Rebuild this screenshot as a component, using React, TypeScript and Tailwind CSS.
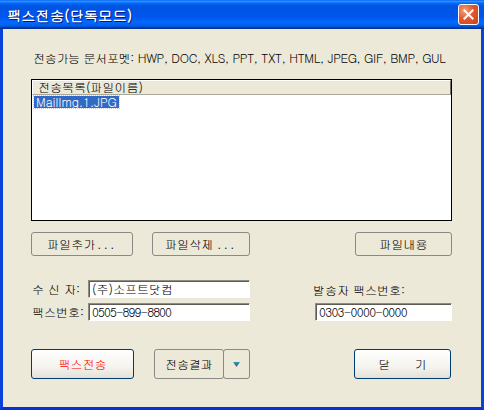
import React from "react";

const font = "font-['Gulim','Noto_Sans_CJK_KR',sans-serif]";

function Btn({ w, h, children, strong, className = "" }: { w: string; h: string; children: React.ReactNode; strong?: boolean; className?: string }) {
  return (
    <div
      className={`${w} ${h} flex items-center justify-center rounded-[3px] border ${
        strong
          ? "border-[#003C74] bg-[linear-gradient(to_bottom,#FFFFFF_0%,#F4F3EE_60%,#E3E1D6_100%)]"
          : "border-[#8A8A84] bg-[#ECE9D8]"
      } text-[12px] leading-[14px] text-black ${className}`}
    >
      {children}
    </div>
  );
}

function Field({ w, value, track = "" }: { w: string; value: string; track?: string }) {
  return (
    <div
      className={`${w} h-[18px] bg-white border-t border-l border-[#8E8B80] border-b border-r border-b-white border-r-white shadow-[inset_1px_1px_0_#5E5C55] flex items-center pl-[3px] text-[12px] leading-[14px] text-black ${track}`}
    >
      {value}
    </div>
  );
}

export default function App() {
  return (
    <div className={`w-[484px] h-[410px] flex flex-col ${font}`}>
      {/* title bar */}
      <div className="h-[29px] shrink-0 flex items-center justify-between pl-[7px] pr-[5px] bg-[linear-gradient(to_bottom,#0058EE_0%,#3593FF_4%,#288EFF_6%,#127DFF_8%,#036FFC_10%,#0262EE_14%,#0057E5_20%,#0054E3_24%,#0055EB_56%,#005BF5_66%,#026AFE_76%,#0062EF_86%,#0052D6_92%,#0040AB_94%,#003092_100%)]">
        <span className="text-white font-bold text-[14px] leading-[16px] tracking-[0.3px] [text-shadow:1px_1px_0_#0A1883]">
          팩스전송(단독모드)
        </span>
        <div className="w-[21px] h-[21px] rounded-[3px] border border-white bg-[radial-gradient(circle_at_30%_30%,#F0A080_0%,#E2592F_45%,#C8401C_100%)] flex items-center justify-center">
          <svg width="11" height="11" viewBox="0 0 11 11">
            <path d="M1.5 1.5 L9.5 9.5 M9.5 1.5 L1.5 9.5" stroke="white" strokeWidth="2" strokeLinecap="square" />
          </svg>
        </div>
      </div>

      {/* body with frame */}
      <div className="flex-1 flex flex-col bg-[#ECE9D8] border-l-[3px] border-r-[3px] border-b-[3px] border-l-[#0842D8] border-r-[#0842D8] border-b-[#0831D9] pl-[28px] pt-[22px]">
        <div className="text-[12px] leading-[14px] text-black ml-[2px] whitespace-nowrap tracking-[-0.3px]">
          전송가능 문서포멧: HWP, DOC, XLS, PPT, TXT, HTML, JPEG, GIF, BMP, GUL
        </div>

        {/* list box */}
        <div className="mt-[14px] w-[421px] h-[142px] border border-black bg-white flex flex-col">
          <div className="h-[15px] shrink-0 bg-[#ECE9D8] border-t border-l border-white border-b border-r border-b-[#ACA899] border-r-[#716F64] text-[12px] leading-[12px] pl-[5px] text-black">
            전송목록(파일이름)
          </div>
          <div className="mt-[1px] ml-[2px] self-start h-[12px] px-[2px] bg-[#316AC5] outline outline-1 outline-dotted outline-[#F0D060] text-white text-[12px] leading-[12px]">
            MailImg.1.JPG
          </div>
        </div>

        {/* buttons row 1 */}
        <div className="mt-[11px] flex">
          <Btn w="w-[102px]" h="h-[24px]">
            파일추가<span className="tracking-[2.5px] ml-[2px]">...</span>
          </Btn>
          <Btn w="w-[98px]" h="h-[24px]" className="ml-[19px]">
            파일삭제<span className="tracking-[2.5px] ml-[4px]">...</span>
          </Btn>
          <Btn w="w-[97px]" h="h-[24px]" className="ml-[105px]">파일내용</Btn>
        </div>

        {/* fields */}
        <div className="mt-[24px] flex">
          <div className="flex flex-col gap-[5px]">
            <div className="flex items-center">
              <span className="w-[57px] pl-[1px] text-[12px] leading-[14px] whitespace-pre">수 신 자:</span>
              <Field w="w-[162px]" value="(주)소프트닷컴" />
            </div>
            <div className="flex items-center">
              <span className="w-[57px] pl-[1px] text-[12px] leading-[14px]">팩스번호:</span>
              <Field w="w-[162px]" value="0505-899-8800" track="tracking-[-0.9px]" />
            </div>
          </div>
          <div className="ml-[63px] flex flex-col">
            <span className="mt-[3px] text-[12px] leading-[14px] whitespace-nowrap">발송자 팩스번호:</span>
            <div className="mt-[6px] ml-[2px]">
              <Field w="w-[137px]" value="0303-0000-0000" track="tracking-[-0.7px]" />
            </div>
          </div>
        </div>

        {/* bottom buttons */}
        <div className="mt-[28px] flex">
          <Btn w="w-[103px]" h="h-[30px]" strong>
            <span className="text-[#FF0000]">팩스전송</span>
          </Btn>
          <div className="ml-[20px] flex">
            <Btn w="w-[70px]" h="h-[30px]">전송결과</Btn>
            <Btn w="w-[27px]" h="h-[30px]" className="-ml-[1px]">
              <svg width="7" height="5" viewBox="0 0 7 5">
                <defs>
                  <linearGradient id="tri" x1="0" y1="0" x2="0" y2="1">
                    <stop offset="0" stopColor="#1FA8A8" />
                    <stop offset="0.55" stopColor="#2E7090" />
                    <stop offset="1" stopColor="#C030B0" />
                  </linearGradient>
                </defs>
                <path d="M0 0 H7 L3.5 5 Z" fill="url(#tri)" />
              </svg>
            </Btn>
          </div>
          <Btn w="w-[97px]" h="h-[30px]" strong className="ml-[104px] whitespace-pre">
            {"닫      기"}
          </Btn>
        </div>
      </div>
    </div>
  );
}
